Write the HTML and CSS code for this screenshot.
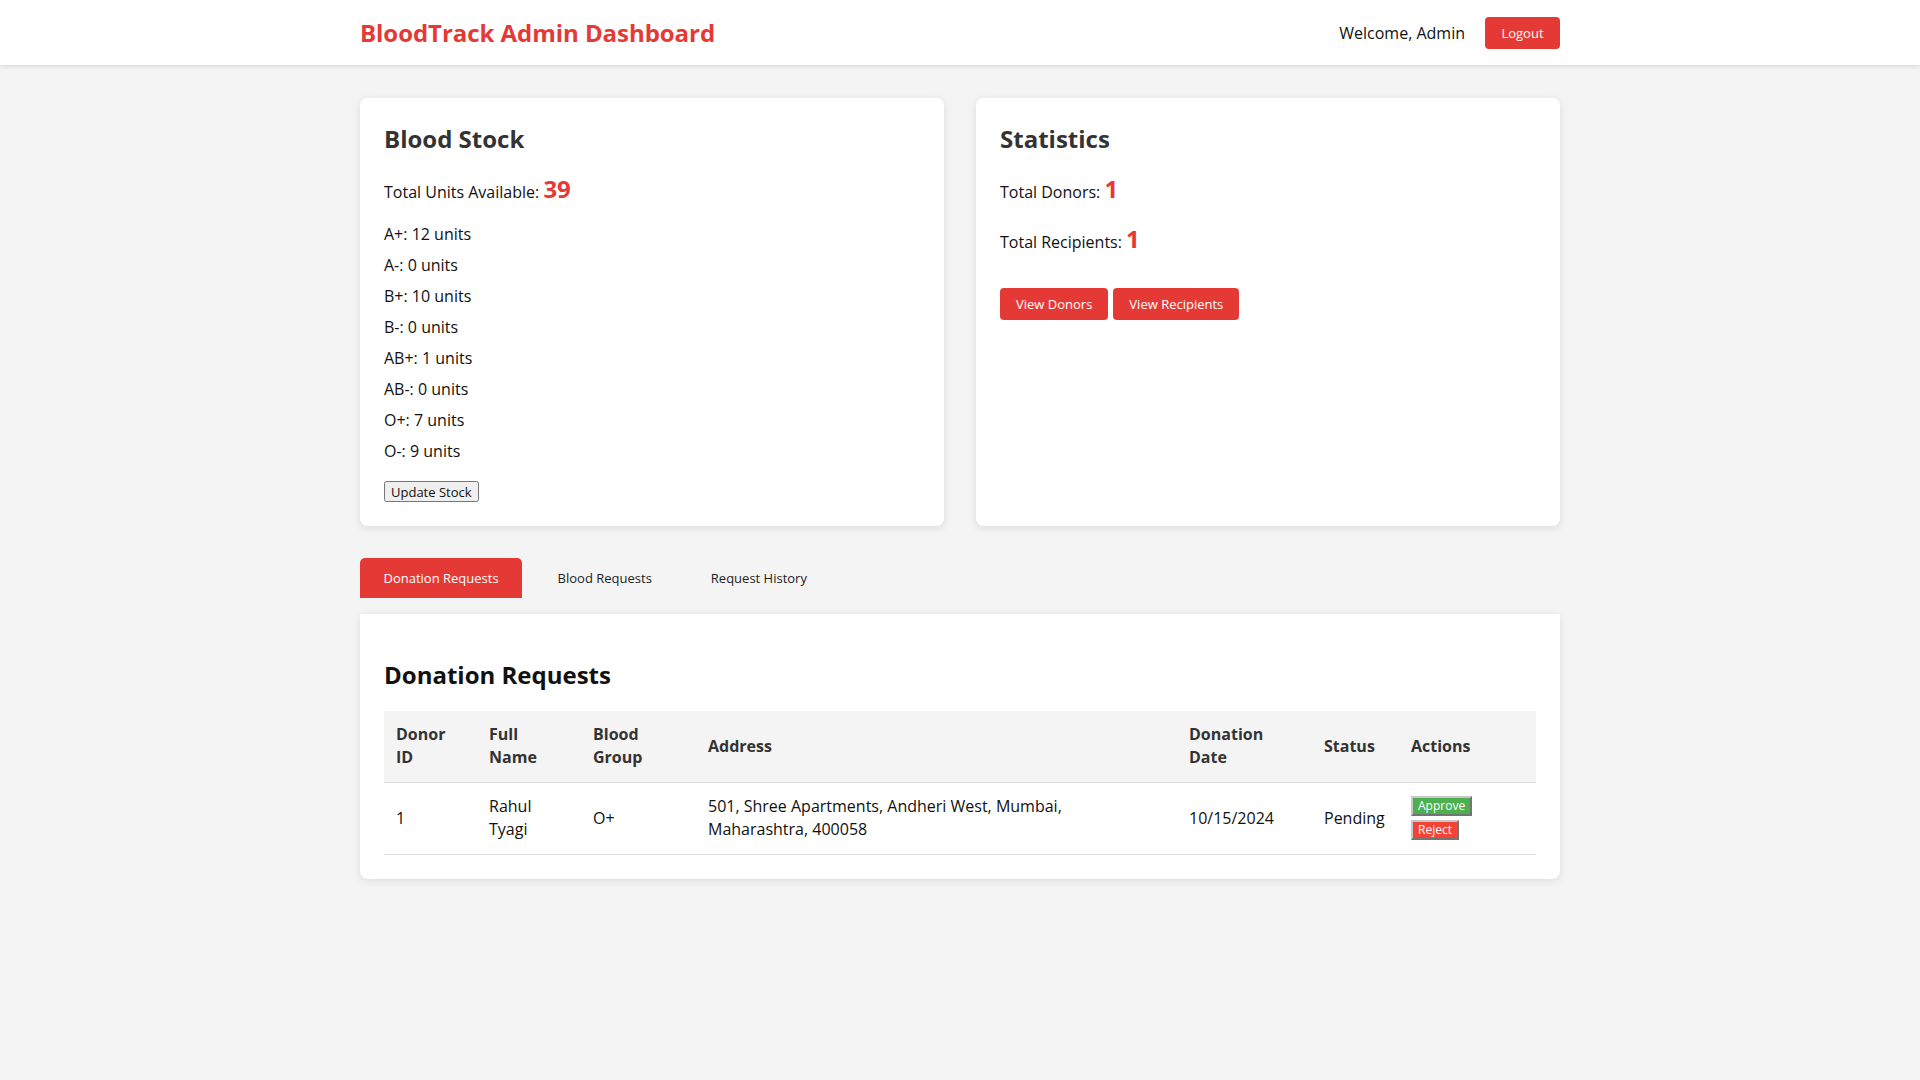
FILE: index.html
```html
<!DOCTYPE html>
<html lang="en">
<head>
<meta charset="UTF-8">
<title>BloodTrack Admin Dashboard</title>
<link rel="stylesheet" href="styles.css">
</head>
<body>
<header class="topbar">
  <div class="topbar-inner">
    <h1 class="brand">BloodTrack Admin Dashboard</h1>
    <div class="user-area">
      <span class="welcome">Welcome, Admin</span>
      <button class="btn-red btn-logout">Logout</button>
    </div>
  </div>
</header>

<main class="main">
  <section class="cards">
    <div class="card">
      <h2 class="card-title">Blood Stock</h2>
      <p class="total-line">Total Units Available: <span class="big-num">39</span></p>
      <ul class="stock-list">
        <li>A+: 12 units</li>
        <li>A-: 0 units</li>
        <li>B+: 10 units</li>
        <li>B-: 0 units</li>
        <li>AB+: 1 units</li>
        <li>AB-: 0 units</li>
        <li>O+: 7 units</li>
        <li>O-: 9 units</li>
      </ul>
      <button class="btn-plain">Update Stock</button>
    </div>
    <div class="card">
      <h2 class="card-title">Statistics</h2>
      <p class="stat-line">Total Donors: <span class="big-num">1</span></p>
      <p class="stat-line">Total Recipients: <span class="big-num">1</span></p>
      <div class="stat-actions">
        <button class="btn-red">View Donors</button>
        <button class="btn-red">View Recipients</button>
      </div>
    </div>
  </section>

  <nav class="tabs">
    <button class="tab tab-active">Donation Requests</button>
    <button class="tab">Blood Requests</button>
    <button class="tab">Request History</button>
  </nav>

  <section class="panel">
    <h2 class="panel-title">Donation Requests</h2>
    <table class="req-table">
      <colgroup>
        <col class="c-id"><col class="c-name"><col class="c-group"><col class="c-addr"><col class="c-date"><col class="c-status"><col class="c-actions">
      </colgroup>
      <thead>
        <tr>
          <th>Donor ID</th>
          <th>Full Name</th>
          <th>Blood Group</th>
          <th>Address</th>
          <th>Donation Date</th>
          <th>Status</th>
          <th>Actions</th>
        </tr>
      </thead>
      <tbody>
        <tr>
          <td>1</td>
          <td>Rahul Tyagi</td>
          <td>O+</td>
          <td>501, Shree Apartments, Andheri West, Mumbai, Maharashtra, 400058</td>
          <td>10/15/2024</td>
          <td>Pending</td>
          <td>
            <div class="actions">
              <button class="btn-approve">Approve</button>
              <button class="btn-reject">Reject</button>
            </div>
          </td>
        </tr>
      </tbody>
    </table>
  </section>
</main>
</body>
</html>
```

FILE: styles.css
```css
* { box-sizing: border-box; }

body {
  margin: 0;
  background: #f4f4f4;
  font-family: "Open Sans", "Noto Sans", sans-serif;
  color: #111;
}

.topbar {
  background: #fff;
  height: 65px;
  box-shadow: 0 2px 4px rgba(0, 0, 0, 0.1);
}

.topbar-inner {
  width: 1200px;
  height: 100%;
  margin: 0 auto;
  display: flex;
  align-items: center;
  justify-content: space-between;
}

.brand {
  margin: 0;
  font-size: 24px;
  font-weight: 700;
  color: #e53935;
  line-height: 33px;
  letter-spacing: -0.05px;
}

.user-area {
  display: flex;
  align-items: center;
  gap: 20px;
}

.welcome {
  font-size: 16px;
  color: #111;
}

.btn-red {
  background: #e53935;
  color: #fff;
  border: none;
  border-radius: 4px;
  font-family: "Open Sans", "Noto Sans", sans-serif;
  font-size: 13px;
  line-height: 16px;
  padding: 8px 16px;
  cursor: pointer;
}

.btn-logout {
  height: 32px;
  width: 75px;
  padding: 0;
}

.main {
  width: 1200px;
  margin: 33px auto 40px;
}

.cards {
  display: grid;
  grid-template-columns: 1fr 1fr;
  gap: 32px;
}

.card {
  background: #fff;
  border-radius: 8px;
  box-shadow: 0 2px 8px rgba(0, 0, 0, 0.1);
  padding: 24px;
}

.card-title {
  margin: 0 0 21px;
  font-size: 24px;
  line-height: 33px;
  color: #333;
}

.total-line,
.stat-line {
  margin: 0;
  font-size: 16px;
  line-height: 32px;
  height: 32px;
  color: #111;
}

.big-num {
  font-size: 24px;
  line-height: 1;
  font-weight: 700;
  color: #e53935;
}

.stock-list {
  list-style: none;
  margin: 11px 0 13px;
  padding: 0;
}

.stock-list li {
  font-size: 16px;
  line-height: 31px;
  height: 31px;
}

.btn-plain {
  font-family: "Open Sans", "Noto Sans", sans-serif;
  font-size: 13px;
  line-height: 15px;
  padding: 2px 5px;
  height: 21px;
  color: #111;
}

.stat-line + .stat-line {
  margin-top: 18px;
}

.stat-actions {
  margin-top: 30px;
  display: flex;
  gap: 5px;
}

.stat-actions .btn-red {
  height: 32px;
}

.tabs {
  margin-top: 32px;
  display: flex;
  gap: 12px;
  height: 40px;
}

.tab {
  background: transparent;
  border: none;
  border-radius: 5px 5px 0 0;
  font-family: "Open Sans", "Noto Sans", sans-serif;
  font-size: 13px;
  line-height: 20px;
  padding: 10px 23.5px;
  color: #222;
  cursor: pointer;
}

.tab-active {
  background: #e53935;
  color: #fff;
}

.panel {
  margin-top: 16px;
  background: #fff;
  padding: 24px;
  border-radius: 0 0 8px 8px;
  box-shadow: 0 2px 8px rgba(0, 0, 0, 0.1);
}

.panel-title {
  margin: 20px 0 20px;
  font-size: 24px;
  line-height: 33px;
  color: #111;
}

.req-table {
  width: 100%;
  border-collapse: collapse;
  table-layout: fixed;
  font-size: 16px;
  line-height: 23.4px;
}

.c-id { width: 93px; }
.c-name { width: 104px; }
.c-group { width: 115px; }
.c-addr { width: 481px; }
.c-date { width: 135px; }
.c-status { width: 87px; }
.c-actions { width: 137px; }

.req-table th,
.req-table td {
  padding: 12px;
  text-align: left;
  border-bottom: 1px solid #ddd;
  vertical-align: middle;
}

.req-table th {
  background: #f4f4f4;
  font-weight: 700;
  color: #333;
}

.req-table td {
  color: #111;
}

.actions {
  display: flex;
  flex-direction: column;
  align-items: flex-start;
  gap: 4px;
}

.btn-approve,
.btn-reject {
  color: #fff;
  font-family: "Open Sans", "Noto Sans", sans-serif;
  font-size: 12px;
  line-height: 14px;
  padding: 1px 5px;
  border: 2px outset #c8c8c8;
  cursor: pointer;
}

.btn-approve { background: #4caf50; }
.btn-reject { background: #f44336; }
```
